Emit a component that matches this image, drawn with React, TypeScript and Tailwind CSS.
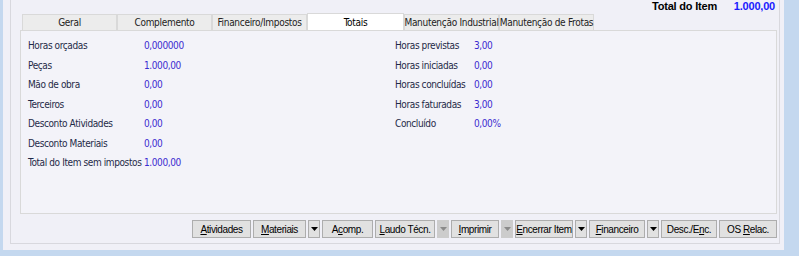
const leftRows = [
  { label: "Horas orçadas", value: "0,000000" },
  { label: "Peças", value: "1.000,00" },
  { label: "Mão de obra", value: "0,00" },
  { label: "Terceiros", value: "0,00" },
  { label: "Desconto Atividades", value: "0,00" },
  { label: "Desconto Materiais", value: "0,00" },
  { label: "Total do Item sem impostos", value: "1.000,00" },
]

const rightRows = [
  { label: "Horas previstas", value: "3,00" },
  { label: "Horas iniciadas", value: "0,00" },
  { label: "Horas concluídas", value: "0,00" },
  { label: "Horas faturadas", value: "3,00" },
  { label: "Concluído", value: "0,00%" },
]

const tabs = ["Geral", "Complemento", "Financeiro/Impostos", "Totais", "Manutenção Industrial", "Manutenção de Frotas"]

const Btn = ({ w, pre, u, post }: { w: string; pre?: string; u: string; post?: string }) => (
  <div
    className={`${w} shrink-0 h-[18px] flex items-center justify-center bg-[#e1e1e1] border border-[#adadad] text-[10px] tracking-[-0.4px] text-black`}
  >
    <span>
      {pre}
      <span className="underline underline-offset-1">{u}</span>
      {post}
    </span>
  </div>
)

const Drop = ({ disabled }: { disabled?: boolean }) => (
  <div
    className={`w-[12px] shrink-0 h-[18px] flex items-center justify-center border ${
      disabled ? "bg-[#cccccc] border-[#cccccc]" : "bg-[#e1e1e1] border-[#adadad]"
    }`}
  >
    <svg width="7" height="4" viewBox="0 0 7 4">
      <polygon points="0,0 7,0 3.5,4" fill={disabled ? "#8a8a8a" : "#000"} />
    </svg>
  </div>
)

export default function App() {
  return (
    <div className="w-[799px] h-[256px] bg-[#c4d8ef] overflow-hidden font-['Liberation_Sans',Arial,sans-serif] whitespace-nowrap">
      <div className="ml-[3px] w-[781px] h-[250px] bg-[#f0f0f7]">
        <div className="ml-[7px] w-[770px] h-[244px] border-l border-r border-b border-[#d8d8de] pl-[9px] pr-[2px]">
          {/* total header */}
          <div className="h-[13px] flex items-center text-[11px] font-bold leading-none tracking-[-0.2px]">
            <span className="ml-[632px] text-black">Total do Item</span>
            <span className="ml-auto mr-[2px] text-[#1a1aff]">1.000,00</span>
          </div>

          {/* tabs */}
          <div className="h-[17px] flex items-end pl-[2px] text-[10px] tracking-[-0.3px] font-['DejaVu_Sans_Condensed','Liberation_Sans',sans-serif]">
            {tabs.map((t) =>
              t === "Totais" ? (
                <div
                  key={t}
                  className="w-[97px] h-[17px] bg-white border-t border-l border-r border-[#d9d9d9] flex items-center justify-center text-black"
                >
                  {t}
                </div>
              ) : (
                <div
                  key={t}
                  className="w-[95px] h-[16px] bg-[#ececec] border border-b-0 border-[#d9d9d9] flex items-center justify-center text-[#222]"
                >
                  {t}
                </div>
              )
            )}
          </div>

          {/* panel */}
          <div className="h-[184px] border border-[#d9d9d9] bg-[#f3f3f9] pt-[5px] pl-[7px] flex text-[10px] tracking-[-0.4px] font-['DejaVu_Sans_Condensed','Liberation_Sans',sans-serif]">
            <div className="w-[367px]">
              {leftRows.map((r) => (
                <div key={r.label} className="h-[19.5px] flex items-center">
                  <span className="w-[116px] shrink-0 text-[#1f2a48]">{r.label}</span>
                  <span className="text-[#3b2bd0]">{r.value}</span>
                </div>
              ))}
            </div>
            <div>
              {rightRows.map((r) => (
                <div key={r.label} className="h-[19.5px] flex items-center">
                  <span className="w-[79px] shrink-0 text-[#1f2a48]">{r.label}</span>
                  <span className="text-[#3b2bd0]">{r.value}</span>
                </div>
              ))}
            </div>
          </div>

          {/* buttons */}
          <div className="mt-[6px] flex justify-end gap-[2px]">
            <Btn w="w-[59px]" u="A" post="tividades" />
            <Btn w="w-[53px]" u="M" post="ateriais" />
            <Drop />
            <Btn w="w-[51px]" pre="A" u="c" post="omp." />
            <Btn w="w-[60px]" u="L" post="audo Técn." />
            <Drop disabled />
            <Btn w="w-[48px]" u="I" post="mprimir" />
            <Drop disabled />
            <Btn w="w-[58px]" u="E" post="ncerrar Item" />
            <Drop />
            <Btn w="w-[56px]" u="F" post="inanceiro" />
            <Drop />
            <Btn w="w-[56px]" pre="Desc./E" u="n" post="c." />
            <Btn w="w-[58px]" pre="OS " u="R" post="elac." />
          </div>
        </div>
      </div>
    </div>
  )
}
